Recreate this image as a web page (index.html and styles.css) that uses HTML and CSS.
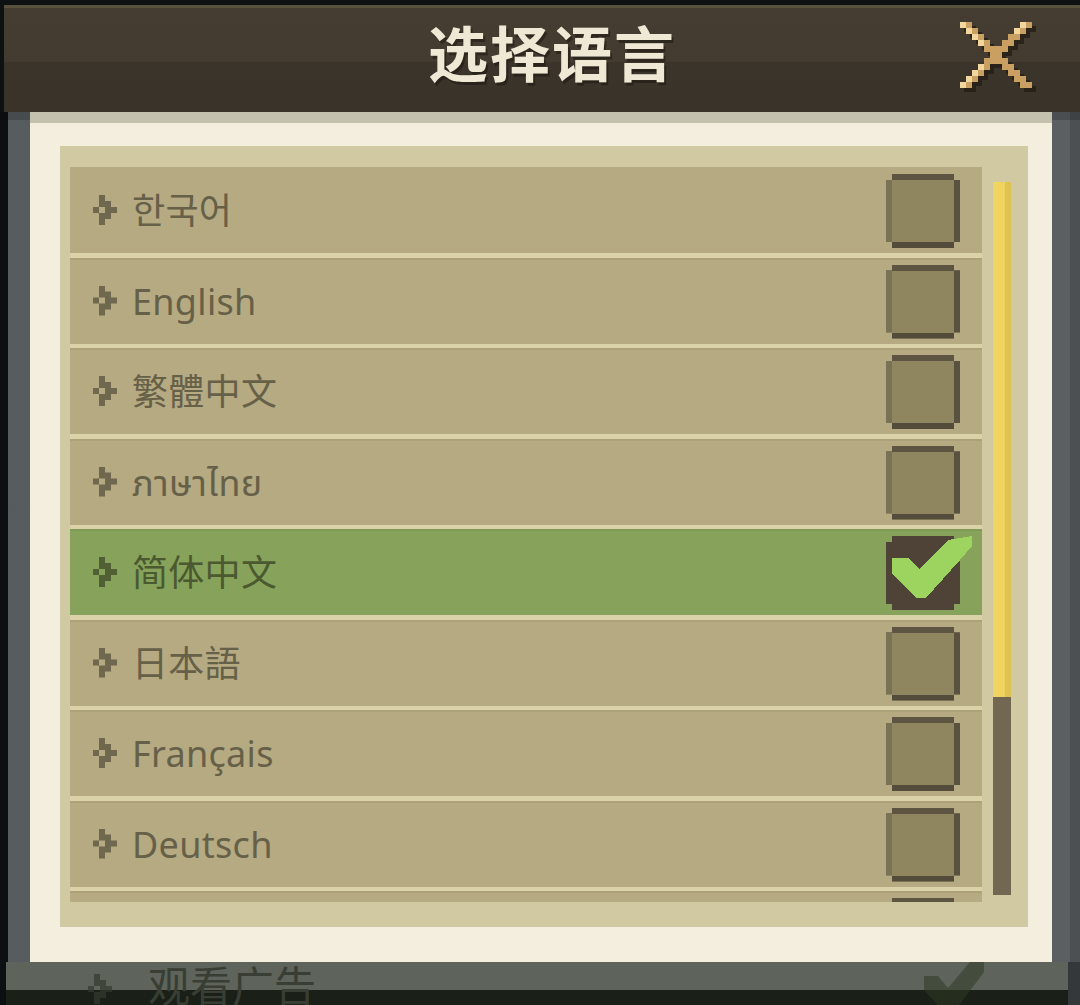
FILE: index.html
```html
<!DOCTYPE html>
<html lang="zh-CN">
<head>
<meta charset="utf-8">
<title>选择语言</title>
<link rel="stylesheet" href="styles.css">
</head>
<body>
<div class="screen">
  <header class="topbar">
    <div class="spacer"></div>
    <h1 class="title">选择语言</h1>
    <button class="close" aria-label="关闭">
      <svg class="close-icon" viewBox="0 0 13 12" width="78" height="72" shape-rendering="crispEdges">
        <defs>
          <g id="xshape">
            <rect x="0" y="0" width="2" height="1"/><rect x="1" y="1" width="2" height="1"/>
            <rect x="2" y="2" width="2" height="1"/><rect x="3" y="3" width="2" height="1"/>
            <rect x="4" y="4" width="2" height="1"/><rect x="5" y="5" width="2" height="1"/>
            <rect x="6" y="6" width="2" height="1"/><rect x="7" y="7" width="2" height="1"/>
            <rect x="8" y="8" width="2" height="1"/><rect x="9" y="9" width="2" height="1"/>
            <rect x="10" y="10" width="2" height="1"/>
            <rect x="10" y="0" width="2" height="1"/><rect x="9" y="1" width="2" height="1"/>
            <rect x="8" y="2" width="2" height="1"/><rect x="7" y="3" width="2" height="1"/>
            <rect x="6" y="4" width="2" height="1"/><rect x="5" y="5" width="2" height="1"/>
            <rect x="4" y="6" width="2" height="1"/><rect x="3" y="7" width="2" height="1"/>
            <rect x="2" y="8" width="2" height="1"/><rect x="1" y="9" width="2" height="1"/>
            <rect x="0" y="10" width="2" height="1"/>
          </g>
        </defs>
        <use href="#xshape" x="0.7" y="0.7" fill="#221d15" opacity="0.75"/>
        <use href="#xshape" fill="#c9a062"/>
        <g fill="#f1d79d">
          <rect x="0" y="0" width="1" height="1"/><rect x="1" y="1" width="1" height="1"/>
          <rect x="2" y="2" width="1" height="1"/><rect x="3" y="3" width="1" height="1"/>
          <rect x="10" y="0" width="1" height="1"/><rect x="9" y="1" width="1" height="1"/>
          <rect x="3" y="7" width="1" height="1"/><rect x="2" y="8" width="1" height="1"/>
          <rect x="1" y="9" width="1" height="1"/><rect x="0" y="10" width="1" height="1"/>
        </g>
      </svg>
    </button>
  </header>

  <div class="stage">
    <section class="modal">
      <div class="panel">
        <ul class="list">
          <li class="row"><span class="bullet"></span><span class="label">한국어</span><span class="box"></span></li>
          <li class="row"><span class="bullet"></span><span class="label">English</span><span class="box"></span></li>
          <li class="row"><span class="bullet"></span><span class="label">繁體中文</span><span class="box"></span></li>
          <li class="row"><span class="bullet"></span><span class="label thai">ภาษาไทย</span><span class="box"></span></li>
          <li class="row selected"><span class="bullet"></span><span class="label">简体中文</span>
            <span class="check-wrap"><span class="box on"></span>
              <svg class="tick" viewBox="0 0 88 64" width="88" height="64" shape-rendering="crispEdges"><polygon points="6,22 22,22 34,33 62,4 86,0 86,10 74,24 40,62 30,62 6,38" fill="#9dd35f"/></svg>
            </span>
          </li>
          <li class="row"><span class="bullet"></span><span class="label">日本語</span><span class="box"></span></li>
          <li class="row"><span class="bullet"></span><span class="label">Français</span><span class="box"></span></li>
          <li class="row"><span class="bullet"></span><span class="label">Deutsch</span><span class="box"></span></li>
          <li class="row"><span class="bullet"></span><span class="label"></span><span class="box"></span></li>
        </ul>
        <div class="scrollbar"><div class="thumb"></div></div>
      </div>
    </section>
  </div>

  <div class="under">
    <span class="bullet dim"></span>
    <span class="under-label">观看广告</span>
    <svg class="under-tick" viewBox="0 0 60 50" width="60" height="50"><polygon points="0,14 14,14 24,26 46,0 60,0 60,10 30,50 20,50 0,28" fill="#2f3a26"/></svg>
  </div>
</div>
</body>
</html>
```
FILE: styles.css
```css
* { box-sizing: border-box; }

html, body {
  margin: 0;
  padding: 0;
}

body {
  width: 1080px;
  height: 1005px;
  overflow: hidden;
  background: #0e1112;
  font-family: "Noto Sans", "Noto Sans CJK SC", "Noto Sans Thai", "DejaVu Sans", sans-serif;
}

.screen {
  padding-top: 5px;
  display: flex;
  flex-direction: column;
}

/* ---------- header ---------- */
.topbar {
  margin-left: 4px;
  height: 107px;
  display: grid;
  grid-template-columns: 1fr auto 1fr;
  align-items: start;
  background: linear-gradient(to bottom, #5a503e 0, #5a503e 3px, #453d31 3px, #433b2f 57px, #3b342a 57px, #3a3329 107px);
}

.title {
  margin: 10px 0 0 20px;
  font-family: "Noto Sans CJK SC", sans-serif;
  font-weight: 700;
  font-size: 60px;
  line-height: 72px;
  letter-spacing: 2px;
  color: #eee8d5;
  text-shadow: 2px 3px 0 rgba(20, 16, 10, 0.45);
}

.close {
  justify-self: end;
  margin: 17px 42px 0 0;
  padding: 0;
  border: 0;
  background: none;
  display: block;
  line-height: 0;
}

.close-icon { display: block; }

/* ---------- stage behind modal ---------- */
.stage {
  height: 850px;
  padding-left: 30px;
  background:
    linear-gradient(to bottom, rgba(0,0,0,0.18) 0, rgba(0,0,0,0.18) 8px, transparent 8px),
    linear-gradient(to right, #0d1012 0, #0d1012 8px, #565b5e 8px, #575c5f 30px, #5b5f61 30px, #5b5f61 1070px, #4c5053 1070px);
}

.modal {
  width: 1022px;
  height: 850px;
  background: #f3eedd;
  border-top: 11px solid #c5c1af;
  padding: 23px 24px 35px 30px;
}

.panel {
  height: 781px;
  background: #d1c9a2;
  padding: 21px 0 0 10px;
  display: flex;
  align-items: flex-start;
}

/* ---------- list ---------- */
.list {
  list-style: none;
  margin: 0;
  padding: 0;
  width: 912px;
  height: 735px;
  overflow: hidden;
  display: flex;
  flex-direction: column;
  gap: 4.5px;
  background: #dbd2aa;
}

.row {
  flex: 0 0 86px;
  height: 86px;
  display: flex;
  align-items: center;
  padding: 0 22px 0 23px;
  background: #b5aa82;
  border-top: 2px solid #aca179;
  color: #676048;
}

.row:first-child { border-top-color: #b5aa82; }

.row.selected {
  background: #87a25a;
  border-top-color: #809b53;
  color: #4a5930;
}

.bullet {
  flex: 0 0 24px;
  width: 24px;
  height: 30px;
  background: currentColor;
  clip-path: polygon(
    6px 0, 12px 0, 12px 6px, 18px 6px, 18px 12px, 24px 12px, 24px 18px, 18px 18px,
    18px 24px, 12px 24px, 12px 30px, 6px 30px, 6px 24px, 6px 18px, 12px 18px, 12px 12px,
    6px 12px, 6px 18px, 0 18px, 0 12px, 6px 12px, 6px 6px
  );
  opacity: 0.9;
  margin-top: -2px;
}

.label {
  flex: 1;
  margin-left: 15px;
  font-size: 36px;
  line-height: 1;
  letter-spacing: 0.3px;
  white-space: nowrap;
}

.box {
  flex: 0 0 74px;
  width: 74px;
  height: 74px;
  background: #8f865f;
  border: 6px solid;
  border-color: #5d5542 #5a5240 #544c3a #7a7255;
  clip-path: polygon(6px 0, 68px 0, 68px 6px, 74px 6px, 74px 68px, 68px 68px, 68px 74px, 6px 74px, 6px 68px, 0 68px, 0 6px, 6px 6px);
}

.check-wrap {
  position: relative;
  width: 74px;
  height: 74px;
  flex: 0 0 74px;
}

.box.on {
  display: block;
  background: #4e4336;
  border-color: #4e4336;
}

.tick {
  position: absolute;
  left: 0;
  top: 0;
}

/* ---------- scrollbar ---------- */
.scrollbar {
  margin: 15px 0 0 11px;
  width: 18px;
  height: 713px;
  background: #726753;
}

.thumb {
  height: 515px;
  background: linear-gradient(to right, #f1d560 0, #efd35d 12px, #dfc251 12px);
}

/* ---------- dimmed content below ---------- */
.under {
  height: 43px;
  display: flex;
  align-items: flex-start;
  padding-left: 88px;
  overflow: hidden;
  background:
    linear-gradient(to right, #0d1012 0, #0d1012 6px, transparent 6px, transparent 1068px, #34383a 1068px),
    linear-gradient(to bottom, #5e635b 0, #5e635b 28px, #1a1f17 28px);
  color: #353a30;
}

.bullet.dim {
  margin-top: 12px;
  opacity: 0.7;
}

.under-label {
  margin-left: 36px;
  margin-top: 0;
  font-family: "Noto Sans CJK SC", sans-serif;
  font-size: 42px;
  line-height: 44px;
  color: #393e34;
}

.under-tick {
  margin-left: auto;
  margin-right: 96px;
  margin-top: 0;
  opacity: 0.55;
}
```
